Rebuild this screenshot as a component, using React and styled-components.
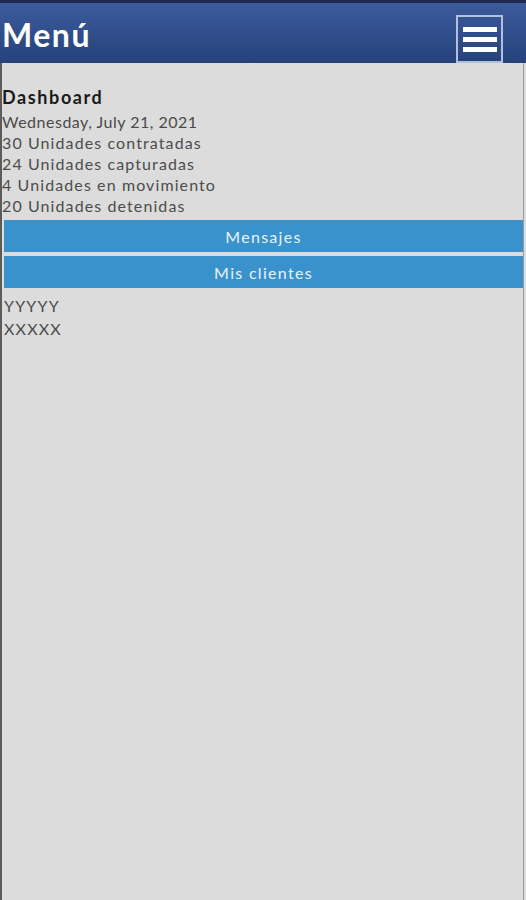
import React from 'react'
import styled, { createGlobalStyle } from 'styled-components'

const GlobalStyle = createGlobalStyle`
	html, body {
		margin: 0;
		padding: 0;
		background: #dcdcdc;
		font-family: "Lato", "Open Sans", sans-serif;
	}
`

const Frame = styled.div`
	min-height: 900px;
	box-sizing: border-box;
	border-left: 2px solid #5c5c5c;
	border-right: 1px solid #9a9a9a;
	margin-right: 2px;
	background: #dcdcdc;
`

const Header = styled.header`
	height: 60px;
	border-top: 3px solid #1c2a4e;
	margin-left: -2px;
	margin-right: -3px;
	padding: 0 23px 0 2px;
	display: flex;
	align-items: center;
	justify-content: space-between;
	background: linear-gradient(#3b5b9c, #26427a);
`

const Title = styled.h1`
	margin: 0;
	color: #fff;
	font-size: 32px;
	font-weight: 700;
	letter-spacing: 1.5px;
	padding-top: 2px;
`

const MenuButton = styled.button`
	width: 47px;
	height: 48px;
	margin-top: 12px;
	border: 2px solid #b3bfdb;
	background: transparent;
	padding: 0;
	display: flex;
	flex-direction: column;
	align-items: center;
	justify-content: center;
	gap: 5px;
	cursor: pointer;
`

const Bar = styled.span`
	width: 34px;
	height: 5px;
	background: #fff;
`

const Content = styled.main`
	padding: 22px 0 0 0;
	color: #3e3e3e;
`

const Heading = styled.h2`
	margin: 0 0 2px 0;
	font-size: 18px;
	font-weight: 700;
	color: #1a1a1a;
	line-height: 24px;
	letter-spacing: 1.6px;
`

const Line = styled.div`
	font-size: 16px;
	line-height: 21px;
	letter-spacing: ${p => (p.muted ? '0.5px' : '1.1px')};
	color: ${p => (p.muted ? '#4a4a4a' : '#4c4c4c')};
`

const Buttons = styled.div`
	display: flex;
	flex-direction: column;
	gap: 4px;
	margin: 4px 0 0 2px;
`

const NavButton = styled.button`
	height: 32px;
	border: none;
	background: #3a92cc;
	color: #e8f2fa;
	font-family: inherit;
	font-size: 16px;
	letter-spacing: 1.3px;
	cursor: pointer;
`

const List = styled.div`
	padding: 6px 0 0 2px;
`

const Item = styled.div`
	font-size: 16px;
	line-height: 23px;
	letter-spacing: 1.2px;
	color: #4c4c4c;
`

const App = () => (
	<>
		<GlobalStyle />
		<Frame>
			<Header>
				<Title>Menú</Title>
				<MenuButton aria-label="menu">
					<Bar />
					<Bar />
					<Bar />
				</MenuButton>
			</Header>
			<Content>
				<Heading>Dashboard</Heading>
				<Line muted>Wednesday, July 21, 2021</Line>
				<Line>30 Unidades contratadas</Line>
				<Line>24 Unidades capturadas</Line>
				<Line>4 Unidades en movimiento</Line>
				<Line>20 Unidades detenidas</Line>
				<Buttons>
					<NavButton>Mensajes</NavButton>
					<NavButton>Mis clientes</NavButton>
				</Buttons>
				<List>
					<Item>YYYYY</Item>
					<Item>XXXXX</Item>
				</List>
			</Content>
		</Frame>
	</>
)

export default App
